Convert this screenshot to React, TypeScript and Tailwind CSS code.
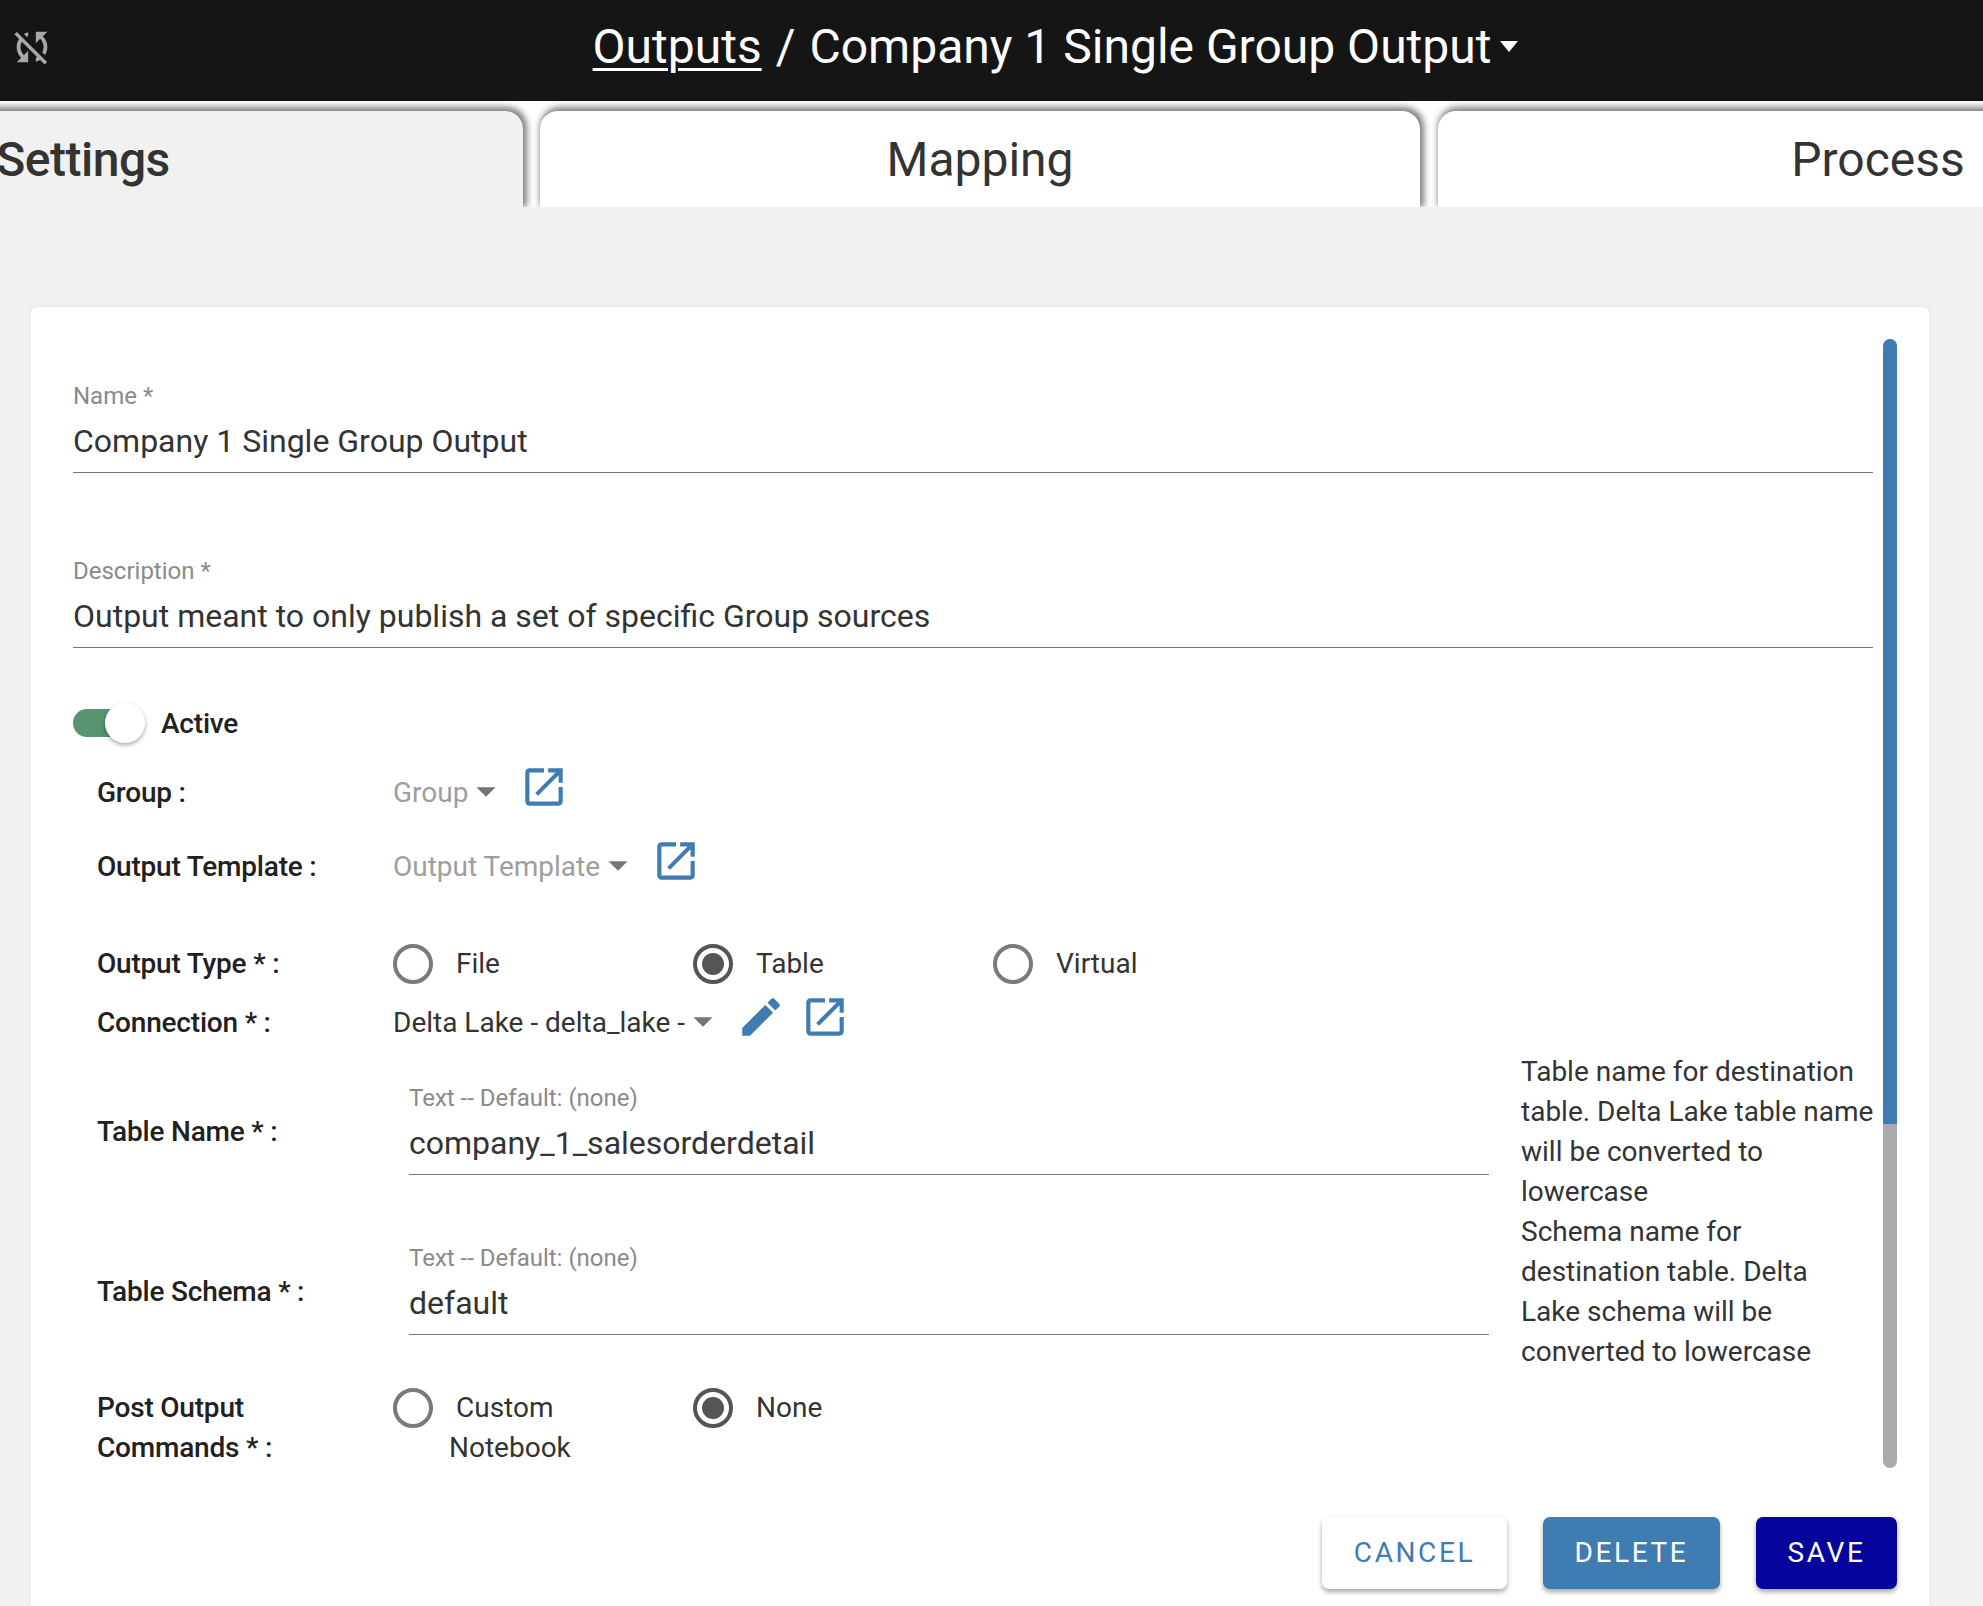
import { MdEdit, MdArrowDropDown, MdOpenInNew, MdSyncDisabled } from 'react-icons/md';

const Tab = ({ label, active, className = '' }: { label: string; active?: boolean; className?: string }) => (
  <div
    className={`flex h-[96px] w-[880px] shrink-0 items-center justify-center rounded-t-[18px] pt-[2px] text-[48px] text-[#333] shadow-[2px_-2px_6px_2px_rgba(0,0,0,0.5)] ${active ? 'bg-[#f1f1f1] font-medium tracking-[-0.5px]' : 'bg-white'} ${className}`}
  >
    {label}
  </div>
);

const Field = ({ label, value, className = '' }: { label: string; value: string; className?: string }) => (
  <div className={`border-b border-[#777] pb-[11px] ${className}`}>
    <div className="h-[30px] text-[24px] leading-[30px] text-[#8a8a8a]">{label}</div>
    <div className="mt-[10px] h-[40px] text-[32px] leading-[40px] text-[#333]">{value}</div>
  </div>
);

const RowLabel = ({ children }: { children: string }) => (
  <div className="w-[296px] shrink-0 pr-[46px] text-[28px] leading-[40px] font-medium tracking-[-0.2px] text-[#212121]">{children}</div>
);

const OpenIcon = ({ className = '' }: { className?: string }) => (
  <MdOpenInNew className={`h-[50px] w-[50px] shrink-0 text-[#3f7cb1] ${className}`} />
);

const Caret = ({ className = '' }: { className?: string }) => (
  <MdArrowDropDown className={`h-[46px] w-[46px] shrink-0 text-[#757575] ${className}`} />
);

const Radio = ({ checked }: { checked?: boolean }) => (
  <div
    className={`flex h-[40px] w-[40px] shrink-0 items-center justify-center rounded-full border-[4px] ${checked ? 'border-[#555]' : 'border-[#7a7a7a]'}`}
  >
    {checked && <div className="h-[22px] w-[22px] rounded-full bg-[#555]" />}
  </div>
);

const RadioOption = ({ label, checked }: { label: string; checked?: boolean }) => (
  <div className="flex w-[300px] items-center gap-[23px] text-[28px] leading-[40px] text-[#333]">
    <Radio checked={checked} />
    {label}
  </div>
);

const TextInput = ({ label, value, className = '' }: { label: string; value: string; className?: string }) => (
  <div className={`flex items-center ${className}`}>
    <div className="w-[312px] shrink-0 pt-[6px] text-[28px] leading-[40px] font-medium tracking-[-0.2px] text-[#212121]">{label}</div>
    <div className="flex-1 border-b border-[#777] pb-[11px]">
      <div className="h-[30px] text-[24px] leading-[30px] text-[#8a8a8a]">Text -- Default: (none)</div>
      <div className="mt-[10px] h-[40px] text-[32px] leading-[40px] text-[#333]">{value}</div>
    </div>
  </div>
);

export default function App() {
  return (
    <div className="flex h-screen w-full flex-col overflow-hidden bg-[#f1f1f1] font-['Roboto',sans-serif]">
      <header className="relative z-10 flex h-[101px] shrink-0 items-center bg-[#151515] pl-[9px]">
        <MdSyncDisabled className="h-[46px] w-[46px] shrink-0 -translate-y-[4px] text-[#a8a8a8]" />
        <div className="ml-[73px] flex flex-1 -translate-y-[4px] items-center justify-center text-[48px] text-white">
          <span className="underline decoration-[3px] underline-offset-[5px]">Outputs</span>
          <span className="mx-[14px]">/</span>
          <span>Company 1 Single Group Output</span>
          <span className="ml-[9px] h-0 w-0 border-x-[9px] border-t-[11px] border-x-transparent border-t-white" />
        </div>
      </header>

      <div className="flex h-[106px] shrink-0 gap-[17px] overflow-hidden bg-white pt-[10px] pl-0">
        <Tab label="Settings" active className="-ml-[357px]" />
        <Tab label="Mapping" />
        <Tab label="Process" className="ml-[1px]" />
      </div>

      <main className="flex-1 px-[31px] pt-[100px]">
        <div className="h-full w-[1898px] rounded-t-[6px] bg-white pt-[32px] pr-[32px] pl-[42px] shadow-[0_0_2px_rgba(0,0,0,0.12)]">
          <div className="flex gap-[10px]">
            <div className="h-[1129px] flex-1 overflow-hidden pt-[42px]">
              <Field label="Name *" value="Company 1 Single Group Output" />
              <Field label="Description *" value="Output meant to only publish a set of specific Group sources" className="mt-[83px]" />

              <div className="mt-[55px] flex h-[40px] items-center gap-[16px]">
                <div className="relative h-[40px] w-[72px]">
                  <div className="mt-[6px] h-[28px] w-[52px] rounded-full bg-[#579471]" />
                  <div className="absolute top-0 right-0 h-[40px] w-[40px] rounded-full bg-white shadow-[0_2px_4px_rgba(0,0,0,0.35)]" />
                </div>
                <span className="pt-[2px] text-[28px] leading-[40px] font-medium tracking-[-0.2px] text-[#212121]">Active</span>
              </div>

              <div className="pl-[24px]">
                <div className="mt-[30px] flex h-[40px] items-center">
                  <RowLabel>Group :</RowLabel>
                  <span className="text-[28px] text-[#9e9e9e]">Group</span>
                  <Caret className="-mt-[4px] -ml-[5px]" />
                  <OpenIcon className="-mt-[12px] ml-[10px]" />
                </div>
                <div className="mt-[34px] flex h-[40px] items-center">
                  <RowLabel>Output Template :</RowLabel>
                  <span className="text-[28px] text-[#9e9e9e]">Output Template</span>
                  <Caret className="-mt-[4px] -ml-[5px]" />
                  <OpenIcon className="-mt-[12px] ml-[10px]" />
                </div>
                <div className="mt-[57px] flex h-[40px] items-center">
                  <RowLabel>Output Type * :</RowLabel>
                  <RadioOption label="File" />
                  <RadioOption label="Table" checked />
                  <RadioOption label="Virtual" />
                </div>
                <div className="mt-[19px] flex h-[40px] items-center">
                  <RowLabel>Connection * :</RowLabel>
                  <span className="text-[28px] text-[#333]">Delta Lake - delta_lake -</span>
                  <Caret className="-mt-[4px] -ml-[5px]" />
                  <MdEdit className="-mt-[12px] ml-[10px] h-[50px] w-[50px] shrink-0 text-[#3f7cb1]" />
                  <OpenIcon className="-mt-[12px] ml-[14px]" />
                </div>

                <div className="mt-[8px] flex">
                  <div className="w-[1392px] shrink-0 pt-[32px]">
                    <TextInput label="Table Name * :" value="company_1_salesorderdetail" />
                    <TextInput label="Table Schema * :" value="default" className="mt-[68px]" />
                  </div>
                  <div className="ml-[32px] pt-[1px] text-[28px] leading-[40px] text-[#333]">
                    <div className="w-[354px]">Table name for destination table. Delta Lake table name will be converted to lowercase</div>
                    <div className="w-[340px]">Schema name for destination table. Delta Lake schema will be converted to lowercase</div>
                  </div>
                </div>

                <div className="mt-[16px] flex items-start">
                  <RowLabel>Post Output Commands * :</RowLabel>
                  <div className="flex w-[300px] items-start gap-[16px] text-[28px] leading-[40px] text-[#333]">
                    <Radio />
                    <span className="w-[130px] indent-[7px]">Custom Notebook</span>
                  </div>
                  <RadioOption label="None" checked />
                </div>
              </div>
            </div>

            <div className="flex h-[1129px] w-[14px] shrink-0 flex-col overflow-hidden rounded-full bg-[#aaaaaa]">
              <div className="h-[785px] bg-[#3f7cb1]" />
            </div>
          </div>

          <div className="mt-[49px] flex justify-end gap-[36px] text-[28px] font-normal tracking-[2.6px]">
            <button className="h-[72px] w-[185px] rounded-[7px] bg-white text-[#3f7cb1] shadow-[0_3px_5px_rgba(0,0,0,0.35)]">CANCEL</button>
            <button className="h-[72px] w-[177px] rounded-[7px] bg-[#3f7cb1] text-white shadow-[0_3px_5px_rgba(0,0,0,0.35)]">DELETE</button>
            <button className="h-[72px] w-[141px] rounded-[7px] bg-[#05059b] text-white shadow-[0_3px_5px_rgba(0,0,0,0.35)]">SAVE</button>
          </div>
        </div>
      </main>
    </div>
  );
}
